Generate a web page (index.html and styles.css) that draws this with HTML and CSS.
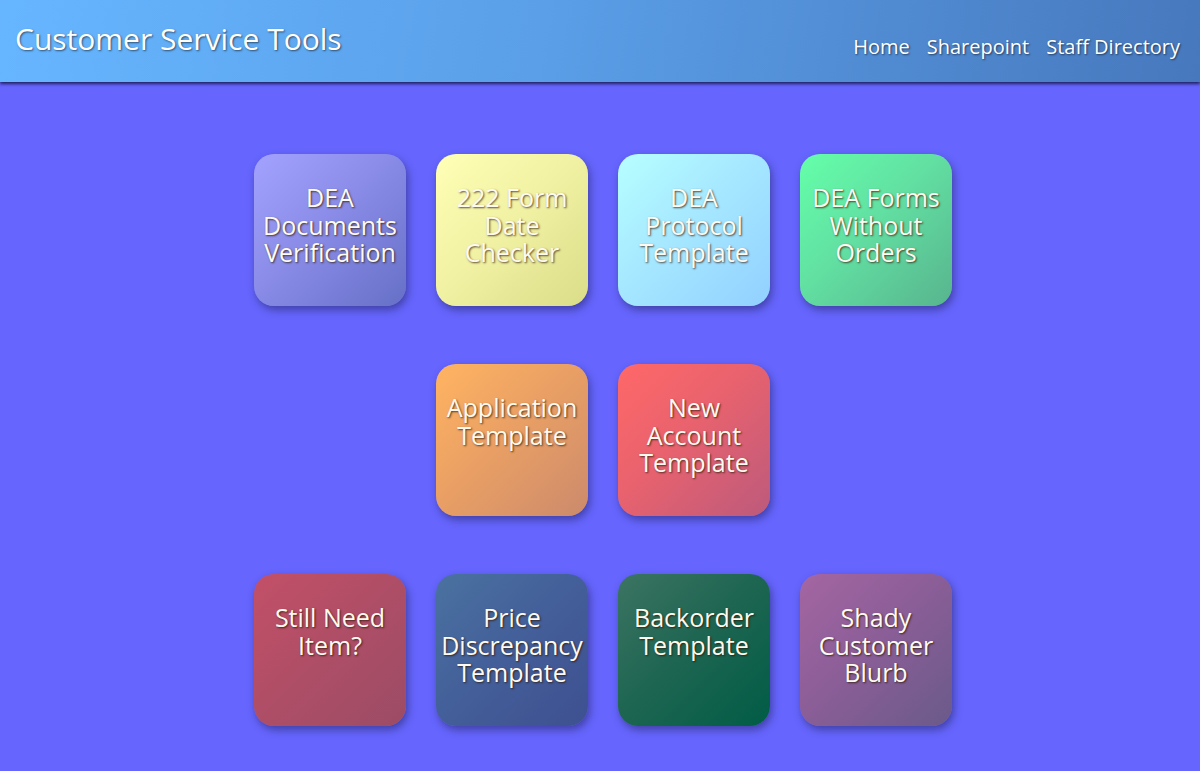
FILE: index.html
```html
<!DOCTYPE html>
<html>
<head>
<meta charset="utf-8">
<title>Customer Service Tools</title>
<link rel="stylesheet" href="styles.css">
</head>
<body>
<header class="topbar">
  <h1 class="title">Customer Service Tools</h1>
  <nav class="nav">
    <a href="#">Home</a>
    <a href="#">Sharepoint</a>
    <a href="#">Staff Directory</a>
  </nav>
</header>
<main class="tiles">
  <div class="row">
    <a class="tile t1" href="#">DEA Documents Verification</a>
    <a class="tile t2" href="#">222 Form Date Checker</a>
    <a class="tile t3" href="#">DEA Protocol Template</a>
    <a class="tile t4" href="#">DEA Forms Without Orders</a>
  </div>
  <div class="row">
    <a class="tile t5" href="#">Application Template</a>
    <a class="tile t6" href="#">New Account Template</a>
  </div>
  <div class="row">
    <a class="tile t7" href="#">Still Need Item?</a>
    <a class="tile t8" href="#">Price Discrepancy Template</a>
    <a class="tile t9" href="#">Backorder Template</a>
    <a class="tile t10" href="#">Shady Customer Blurb</a>
  </div>
</main>
</body>
</html>
```
FILE: styles.css
```css
html, body {
  margin: 0;
  padding: 0;
}
body {
  background: #6666ff;
  font-family: "Open Sans", "Noto Sans", sans-serif;
  color: #fff;
  height: 771px;
  overflow: hidden;
}
.topbar {
  height: 82px;
  display: flex;
  justify-content: space-between;
  align-items: flex-start;
  background: linear-gradient(100deg, #66b6ff 0%, #5a9fe8 45%, #4778bd 100%);
  box-shadow: 0 2px 3px rgba(20, 20, 70, 0.85);
  position: relative;
}
.title {
  margin: 0;
  padding: 20px 0 0 15px;
  font-size: 30px;
  font-weight: 400;
  line-height: 38px;
  text-shadow: 1px 1px 2px rgba(0, 0, 0, 0.55);
}
.nav {
  display: flex;
  gap: 17px;
  padding: 34px 20px 0 0;
}
.nav a {
  color: #fff;
  text-decoration: none;
  font-size: 20px;
  line-height: 26px;
  text-shadow: 1px 1px 2px rgba(0, 0, 0, 0.55);
}
.tiles {
  display: flex;
  flex-direction: column;
  gap: 58px;
  padding: 72px 0 0 6px;
}
.row {
  display: flex;
  justify-content: center;
  gap: 30px;
}
.tile {
  width: 152px;
  height: 152px;
  box-sizing: border-box;
  padding: 30px 3px 0;
  border-radius: 20px;
  text-align: center;
  font-size: 25px;
  line-height: 27.5px;
  color: #fffaf0;
  text-decoration: none;
  text-shadow: 1px 1px 2px rgba(40, 20, 0, 0.75);
  box-shadow: 2px 4px 8px rgba(20, 20, 60, 0.45);
}
.t1 { background: linear-gradient(135deg, #a3a3ff 0%, #8a8ce8 45%, #6670c6 100%); }
.t2 { background: linear-gradient(135deg, #ffffb6 0%, #f2f2a4 45%, #dadd88 100%); }
.t3 { background: linear-gradient(135deg, #b6ffff 0%, #a6e8ff 45%, #92d0ff 100%); }
.t4 { background: linear-gradient(135deg, #64ffaa 0%, #62e0a2 45%, #58b48e 100%); }
.t5 { background: linear-gradient(135deg, #ffb462 0%, #eaa064 45%, #cc8a6c 100%); }
.t6 { background: linear-gradient(135deg, #ff6868 0%, #e8626e 45%, #bc5a7c 100%); }
.t7 { background: linear-gradient(135deg, #c25068 0%, #b04e66 45%, #9c4c66 100%); }
.t8 { background: linear-gradient(135deg, #4a72a0 0%, #44609a 45%, #3e5090 100%); }
.t9 { background: linear-gradient(135deg, #3c7462 0%, #1f6652 45%, #015c46 100%); }
.t10 { background: linear-gradient(135deg, #a466a2 0%, #8c5e98 45%, #6a5a8a 100%); }
```
